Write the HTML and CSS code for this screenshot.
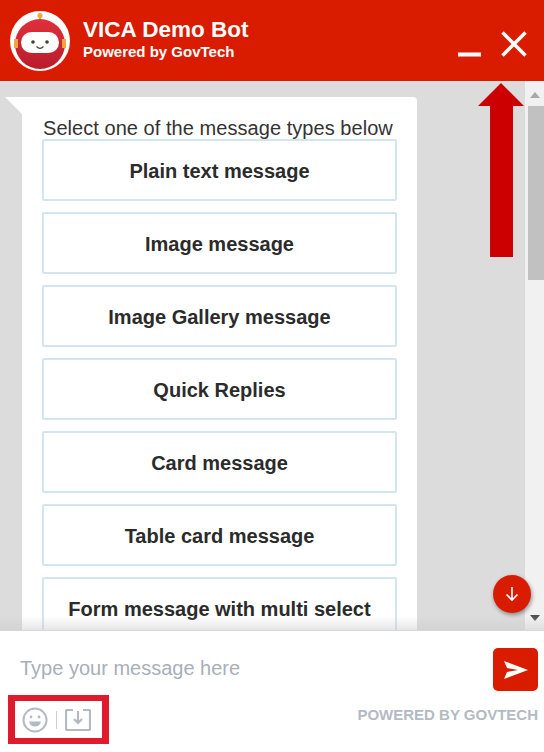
FILE: index.html
```html
<!DOCTYPE html>
<html lang="en">
<head>
    <meta charset="UTF-8">
    <meta name="viewport" content="width=device-width, initial-scale=1.0">
    <title>VICA Demo Bot</title>
    <link rel="stylesheet" href="styles.css">
</head>
<body>
    <div class="chat">
        <header class="chat-header">
            <svg class="avatar" viewBox="0 0 60 60" width="60" height="60">
                <defs>
                    <linearGradient id="headShade" x1="0" y1="0" x2="0" y2="1">
                        <stop offset="0" stop-color="#e0303a"/>
                        <stop offset="1" stop-color="#b81c2c"/>
                    </linearGradient>
                </defs>
                <circle cx="30" cy="30" r="30" fill="#fff"/>
                <circle cx="30" cy="4.500" r="2.500" fill="#f0a63c"/>
                <rect x="29" y="6" width="2" height="3" fill="#f0a63c"/>
                <circle cx="30" cy="33" r="25" fill="url(#headShade)"/>
                <path d="M4 28h4v9H4zM52 28h4v9h-4z" fill="#f0a63c"/>
                <rect x="11" y="21" width="38" height="21" rx="10.500" fill="#fff"/>
                <circle cx="23" cy="31" r="1.800" fill="#4a3a3a"/>
                <circle cx="37" cy="31" r="1.800" fill="#4a3a3a"/>
                <path d="M26.500 35.500q3.500 3.500 7 0" fill="none" stroke="#4a3a3a" stroke-width="1.200"/>
            </svg>
            <div class="titles">
                <div class="title">VICA Demo Bot</div>
                <div class="subtitle">Powered by GovTech</div>
            </div>
            <div class="window-btns">
                <svg class="minimize" width="23" height="5" viewBox="0 0 23 5"><path d="M0 2.500h23" stroke="#fff" stroke-width="4"/></svg>
                <svg width="26" height="26" viewBox="0 0 26 26"><path d="M1.500 1.500l23 23M24.500 1.500l-23 23" stroke="#fff" stroke-width="3.500"/></svg>
            </div>
        </header>

        <main class="messages">
            <div class="thread">
                <div class="bubble">
                    <p class="bubble-text">Select one of the message types below</p>
                    <button class="option">Plain text message</button>
                    <button class="option">Image message</button>
                    <button class="option">Image Gallery message</button>
                    <button class="option">Quick Replies</button>
                    <button class="option">Card message</button>
                    <button class="option">Table card message</button>
                    <button class="option">Form message with multi select</button>
                </div>
            </div>
            <div class="scrollbar">
                <span class="scroll-up"></span>
                <div class="scroll-thumb"></div>
                <span class="scroll-down"></span>
            </div>
            <div class="fade"></div>
            <div class="to-bottom">
                <svg width="16" height="16" viewBox="0 0 16 16"><path d="M8 1v13M2.500 8.500L8 14l5.500-5.500" fill="none" stroke="#fff" stroke-width="1.600"/></svg>
            </div>
            <svg class="up-arrow" width="46" height="174" viewBox="0 0 46 174"><path d="M23 0L46 23H35V174H12V23H0z" fill="#cc0000"/></svg>
        </main>

        <footer class="composer">
            <div class="composer-row">
                <span class="placeholder">Type your message here</span>
                <button class="send">
                    <svg width="24" height="18" viewBox="0 0 24 18"><path d="M0 0L24 9 0 18 3 11 14 9 3 7z" fill="#fff"/></svg>
                </button>
            </div>
            <div class="composer-row tools-row">
                <div class="tools">
                    <svg width="26" height="26" viewBox="0 0 26 26" fill="none" stroke="#b4bac4" stroke-width="2">
                        <circle cx="13" cy="13" r="11.500"/>
                        <circle cx="9" cy="10" r="1.400" fill="#b4bac4" stroke="none"/>
                        <circle cx="17" cy="10" r="1.400" fill="#b4bac4" stroke="none"/>
                        <path d="M7 14.500h12q-1 5-6 5t-6-5z" fill="#b4bac4" stroke="none"/>
                    </svg>
                    <span class="tool-sep"></span>
                    <svg width="26" height="22" viewBox="0 0 26 22" fill="none" stroke="#b4bac4" stroke-width="2.200">
                        <path d="M8 1H2a1 1 0 0 0-1 1v18a1 1 0 0 0 1 1h22a1 1 0 0 0 1-1V2a1 1 0 0 0-1-1h-6"/>
                        <path d="M13 2v12M9 10l4 4 4-4"/>
                    </svg>
                </div>
                <span class="powered">POWERED BY GOVTECH</span>
            </div>
        </footer>
    </div>
</body>
</html>
```

FILE: styles.css
```css
* {
    box-sizing: border-box;
}

body {
    margin: 0;
    font-family: 'Liberation Sans', Arial, sans-serif;
}

.chat {
    width: 544px;
    height: 752px;
    display: flex;
    flex-direction: column;
    overflow: hidden;
}

.chat-header {
    height: 81px;
    flex: none;
    background-color: #d91c00;
    color: #fff;
    display: flex;
    align-items: center;
    padding: 0 17px 0 10px;
}

.avatar {
    flex: none;
}

.titles {
    margin-left: 13px;
    margin-top: -2px;
}

.title {
    font-size: 22.500px;
    font-weight: bold;
    line-height: 24px;
}

.subtitle {
    font-size: 15px;
    font-weight: bold;
    line-height: 19px;
}

.window-btns {
    margin-left: auto;
    display: flex;
    align-items: flex-end;
    gap: 20px;
    margin-top: 6px;
}

.messages {
    position: relative;
    flex: 1;
    min-height: 0;
    background-color: #dcdcdc;
    display: flex;
    overflow: hidden;
}

.thread {
    flex: 1;
    padding: 16px 108px 0 22px;
}

.bubble {
    position: relative;
    background-color: #fff;
    border-radius: 0 4px 0 0;
    padding: 21px 20px 0;
    height: 600px;
}

.bubble::before {
    content: '';
    position: absolute;
    left: -17px;
    top: 0;
    border-top: 17px solid #fff;
    border-left: 17px solid transparent;
}

.bubble-text {
    margin: 0 0 0 1px;
    font-size: 20px;
    line-height: 21px;
    letter-spacing: 0.050px;
    color: #333;
    white-space: nowrap;
}

.option {
    display: block;
    width: 355px;
    height: 62px;
    margin-bottom: 11px;
    padding: 2px 0 0;
    background-color: #fff;
    border: 2px solid #d3e5ef;
    border-radius: 2px;
    font-family: inherit;
    font-size: 20px;
    font-weight: bold;
    color: #2b2b2b;
}

.scrollbar {
    width: 20px;
    flex: none;
    background-color: #f1f1f1;
    display: flex;
    flex-direction: column;
    align-items: center;
}

.scroll-up {
    margin-top: 11px;
    border: 5px solid transparent;
    border-top: 0;
    border-bottom: 6px solid #a8a8a8;
}

.scroll-thumb {
    width: 17px;
    height: 174px;
    margin-top: 8px;
    margin-left: 3px;
    background-color: #c1c1c1;
}

.scroll-down {
    margin-top: auto;
    margin-bottom: 9px;
    border: 5px solid transparent;
    border-bottom: 0;
    border-top: 6px solid #505050;
}

.fade {
    position: absolute;
    left: 0;
    right: 0;
    bottom: 0;
    height: 14px;
    background: linear-gradient(rgba(200, 200, 200, 0), rgba(200, 200, 200, 0.45));
}

.to-bottom {
    position: absolute;
    left: 493px;
    top: 494px;
    width: 38px;
    height: 38px;
    border-radius: 50%;
    background-color: #d91c00;
    box-shadow: 1px 2px 4px rgba(0, 0, 0, 0.4);
    display: flex;
    align-items: center;
    justify-content: center;
}

.up-arrow {
    position: absolute;
    left: 478px;
    top: 2px;
}

.composer {
    height: 122px;
    flex: none;
    background-color: #fff;
    border-top: 1px solid #d4d8dc;
    padding: 17px 6px 0 20px;
}

.composer-row {
    display: flex;
    align-items: center;
    justify-content: space-between;
}

.placeholder {
    font-size: 20px;
    color: #a9afb9;
    margin-bottom: 2px;
}

.send {
    width: 45px;
    height: 43px;
    padding: 0;
    border: none;
    border-radius: 5px;
    background-color: #d91c00;
    display: flex;
    align-items: center;
    justify-content: center;
}

.tools-row {
    margin-left: -12px;
    margin-top: 4px;
}

.tools {
    width: 101px;
    height: 49px;
    border: solid #e01b2e;
    border-width: 6px 7px;
    display: flex;
    align-items: center;
    gap: 8px;
    padding-left: 7px;
}

.tool-sep {
    width: 1px;
    height: 18px;
    background-color: #ccd0d6;
}

.powered {
    font-size: 15px;
    font-weight: bold;
    color: #b4bac4;
    margin-bottom: 10px;
}
```
